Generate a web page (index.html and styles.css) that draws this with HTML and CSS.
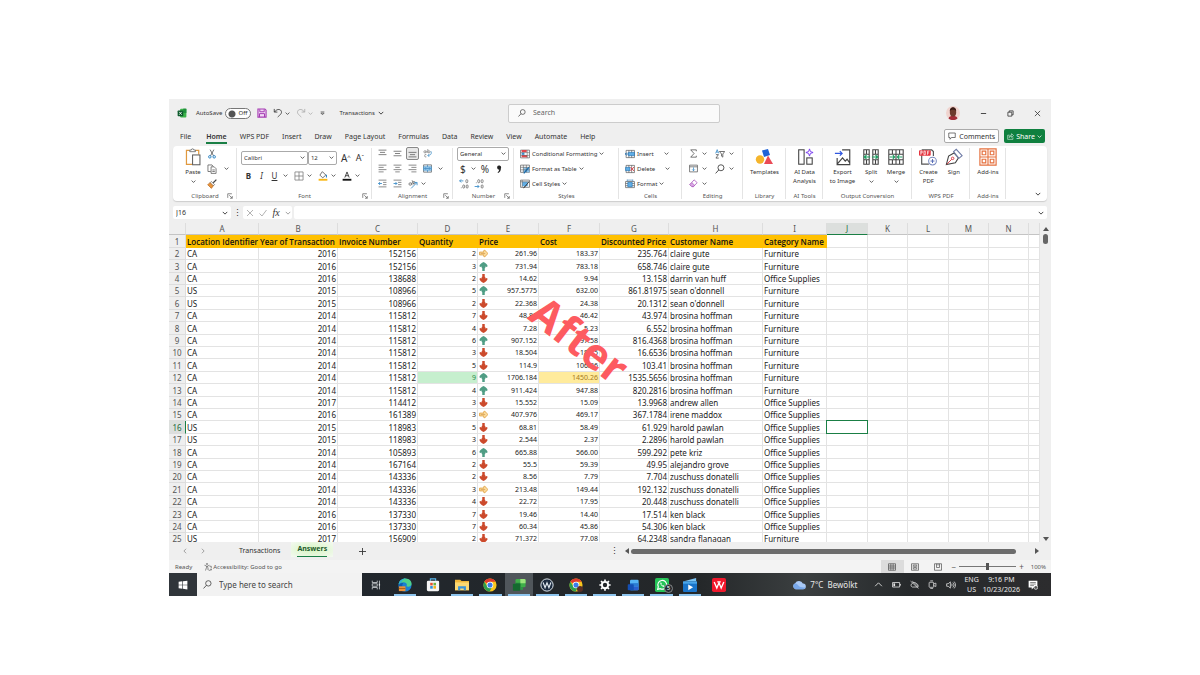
FILE: index.html
```html
<!DOCTYPE html>
<html lang="en">
<head>
<meta charset="utf-8">
<title>Transactions</title>
<link rel="stylesheet" href="styles.css">
</head>
<body>
<svg class="defs" aria-hidden="true">
  <defs>
    <symbol id="chev" viewBox="0 0 8 8"><path d="M1 2.500l3 3 3-3" fill="none" stroke="currentColor" stroke-width="1.200"/></symbol>
    <symbol id="excel" viewBox="0 0 16 16"><rect x="5" y="1" width="10" height="14" rx="1.500" fill="#3cb34a"/><path d="M10 1h5v7h-5z" fill="#1f8f3c"/><rect x="1" y="4" width="9" height="9" rx="1" fill="#0b5a2b"/><path d="M3.500 6.200l4 4.600M7.500 6.200l-4 4.600" stroke="#fff" stroke-width="1.300"/></symbol>
    <symbol id="xlapp" viewBox="0 0 16 16"><rect x="4" y="1" width="11.500" height="9.500" rx="1.500" fill="#3fae49"/><path d="M9.500 1H14a1.500 1.500 0 0 1 1.500 1.500V6h-6z" fill="#9be37c"/><path d="M4 5.500h5.500V10H4z" fill="#1d7f3a"/><rect x="1" y="6.500" width="8.500" height="8" rx="1" fill="#14692f"/><path d="M9.500 10.500h3v3h-3z" fill="#2b9a44"/></symbol>
    <symbol id="save" viewBox="0 0 16 16"><path d="M1.500 1.500h11l2 2v11h-13z" fill="#f1d9f4" stroke="#a53db3" stroke-width="1.800"/><path d="M4.500 2v4h7V2M4 14.500V9h8v5.500" fill="none" stroke="#a53db3" stroke-width="1.600"/></symbol>
    <symbol id="undo" viewBox="0 0 16 16"><path d="M2 1.500v5h5M2.500 6.500C5 2 11 1 13 4.500s-1 6-5.500 10" fill="none" stroke="currentColor" stroke-width="1.300"/></symbol>
    <symbol id="custom" viewBox="0 0 8 8"><path d="M1 1.500h6M1.500 3.500l2.500 2.500 2.500-2.500z" fill="none" stroke="currentColor"/></symbol>
    <symbol id="mag" viewBox="0 0 16 16"><circle cx="9.500" cy="6" r="4.800" fill="none" stroke="currentColor" stroke-width="1.300"/><path d="M6 9.500L1 15" stroke="currentColor" stroke-width="1.400"/></symbol>
    <symbol id="paste" viewBox="0 0 20 22"><path d="M6 3H2v17h7M13 3h4v5" fill="none" stroke="#e0993f" stroke-width="1.500"/><path d="M6 4.500V2.500h2a1.500 1.500 0 0 1 3 0h2v2z" fill="#fff" stroke="#666"/><rect x="9.500" y="8.500" width="9" height="12" fill="#fff" stroke="#555" stroke-width="1.200"/></symbol>
    <symbol id="cut" viewBox="0 0 16 16"><path d="M5 1l5.500 10M11 1L5.500 11" stroke="#444" stroke-width="1.200"/><g fill="none" stroke="#2f86c5" stroke-width="1.600"><circle cx="4.500" cy="12.500" r="2"/><circle cx="11.500" cy="12.500" r="2"/></g></symbol>
    <symbol id="copy" viewBox="0 0 16 16"><path d="M6 12H1.500V1.500H8L10 4" fill="none" stroke="#555" stroke-width="1.200"/><path d="M6.500 4.500h5l3 3v7.500h-8zM8.500 9.500h4M8.500 12h4" fill="#fff" stroke="#555" stroke-width="1.200"/></symbol>
    <symbol id="brush" viewBox="0 0 16 16"><path d="M15 1l-5 5" stroke="#444" stroke-width="2"/><path d="M7 4l5 5-2 2-5-5z" fill="#fff" stroke="#444"/><path d="M5 6L1 9l6 6 3-4z" fill="#e8943a" stroke="#b5651d"/></symbol>
    <symbol id="launch" viewBox="0 0 8 8"><path d="M1 6.500V1h5.500M3 3l4 4M7 4v3H4" fill="none" stroke="#555" stroke-width=".9"/></symbol>
    <symbol id="borders" viewBox="0 0 16 16"><path d="M1.500 1.500h13v13h-13zM8 1.500v13M1.500 8h13" fill="none" stroke="#777" stroke-width="1.200"/></symbol>
    <symbol id="fill" viewBox="0 0 16 16"><path d="M7 1l5.500 5.500L7.500 11 3 6.500z" fill="#fff" stroke="#444" stroke-width="1.200"/><path d="M13.500 6v4.500" stroke="#2f86c5" stroke-width="1.800"/><path d="M1 12.500h14v3H1z" fill="#f9b612"/></symbol>
    <symbol id="fcolor" viewBox="0 0 16 16"><path d="M4.500 10.500L8 1.500l3.500 9M5.700 7.500h4.600" fill="none" stroke="#333" stroke-width="1.400"/><path d="M1 12.500h14v3H1z" fill="#111"/></symbol>
    <symbol id="atop" viewBox="0 0 16 16"><path d="M1 2h14M3.500 6h9M1 10h14" stroke="#555" stroke-width="1.300"/></symbol>
    <symbol id="amid" viewBox="0 0 16 16"><path d="M1 4h14M3.500 8h9M1 12h14" stroke="#555" stroke-width="1.300"/></symbol>
    <symbol id="abot" viewBox="0 0 16 16"><path d="M1 6h14M3.500 10h9M1 14h14" stroke="#555" stroke-width="1.300"/></symbol>
    <symbol id="aleft" viewBox="0 0 16 16"><path d="M1 2h14M1 6h9M1 10h14M1 14h9" stroke="#555" stroke-width="1.200"/></symbol>
    <symbol id="acen" viewBox="0 0 16 16"><path d="M1 2h14M4 6h8M1 10h14M4 14h8" stroke="#555" stroke-width="1.200"/></symbol>
    <symbol id="aright" viewBox="0 0 16 16"><path d="M1 2h14M6 6h9M1 10h14M6 14h9" stroke="#555" stroke-width="1.200"/></symbol>
    <symbol id="wrap" viewBox="0 0 16 16"><g fill="none" stroke="#777" stroke-width="1.200"><circle cx="3.500" cy="5" r="2"/><path d="M5.500 3v4M8.500 0v7"/><circle cx="10.500" cy="5" r="2"/><path d="M6 10a2.200 2.200 0 1 0 0 4"/></g><path d="M14 4c2 4 0 7-5 7.500M11 9l-2.500 2.500L11 14" fill="none" stroke="#2f86c5" stroke-width="1.300"/></symbol>
    <symbol id="merge" viewBox="0 0 16 16"><path d="M1 1.500h14v13H1z" fill="#e6f2fb" stroke="#555" stroke-width="1.200"/><path d="M1 5h14v6H1z" fill="#9fd0f2" stroke="#2f86c5"/><path d="M3 8h10M5 6L3 8l2 2M11 6l2 2-2 2M8 1.500V5M8 11v3.500" fill="none" stroke="#1f6fae"/></symbol>
    <symbol id="outd" viewBox="0 0 16 16"><path d="M1 2h14M9 6h6M9 10h6M1 14h14" stroke="#555" stroke-width="1.200"/><path d="M7 8H1M3.500 5.500L1 8l2.500 2.500" fill="none" stroke="#2f86c5" stroke-width="1.500"/></symbol>
    <symbol id="ind" viewBox="0 0 16 16"><path d="M1 2h14M9 6h6M9 10h6M1 14h14" stroke="#555" stroke-width="1.200"/><path d="M1 8h6M4.500 5.500L7 8l-2.500 2.500" fill="none" stroke="#2f86c5" stroke-width="1.500"/></symbol>
    <symbol id="orient" viewBox="0 0 16 16"><g fill="none" stroke="#666" stroke-width="1.200"><circle cx="3.500" cy="8" r="2"/><path d="M5.500 6l1 4M6.500 2l2.500 6"/><circle cx="9.500" cy="6" r="2"/></g><path d="M5 15L14 6M14.500 10V5.500H10" fill="none" stroke="#2f86c5" stroke-width="1.300"/></symbol>
    <symbol id="comma" viewBox="0 0 16 16"><path d="M5 5.500a3.200 3.200 0 1 1 6 1.500c0 3.500-1.500 6-4.500 7.500l-.8-1.200C7.500 12 8.300 10.500 8.300 8.800 6.500 9 5 7.500 5 5.500z" fill="#222"/></symbol>
    <symbol id="decinc" viewBox="0 0 16 16"><path d="M7 3H1M3.500.5L1 3l2.500 2.500" fill="none" stroke="#2f86c5" stroke-width="1.300"/><g fill="none" stroke="#666" stroke-width="1.200"><rect x="11" y="1" width="3" height="5" rx="1.500"/><rect x="6" y="9.500" width="3" height="5" rx="1.500"/><rect x="11.500" y="9.500" width="3" height="5" rx="1.500"/><path d="M3 14h1.200"/></g></symbol>
    <symbol id="decdec" viewBox="0 0 16 16"><path d="M1 12h7M5.500 9.500L8 12l-2.500 2.500" fill="none" stroke="#2f86c5" stroke-width="1.300"/><g fill="none" stroke="#666" stroke-width="1.200"><rect x="6" y="1" width="3" height="5" rx="1.500"/><rect x="11.500" y="1" width="3" height="5" rx="1.500"/><rect x="11.500" y="9.500" width="3" height="5" rx="1.500"/><path d="M3 6h1.200"/></g></symbol>
    <symbol id="cond" viewBox="0 0 18 16"><path d="M1 1h16v14H1z" fill="#fff" stroke="#555" stroke-width="1.200"/><path d="M3 1h9v4H3zM3 10h10v4H3z" fill="#e0474c"/><path d="M3 5.500h5v4H3z" fill="#3b8fd0"/><path d="M1 5.500h16M1 10.500h16M13 1v14" stroke="#666"/></symbol>
    <symbol id="ftable" viewBox="0 0 18 16"><path d="M1 1h16v13H1z" fill="#fff" stroke="#555" stroke-width="1.200"/><path d="M6 5h11v9H6z" fill="#8cc5ee"/><path d="M1 5h16M1 9.500h16M6 1v13M11.500 1v13" stroke="#555"/><path d="M16 5l-7 8-2 3" stroke="#1769aa" stroke-width="2"/></symbol>
    <symbol id="cstyle" viewBox="0 0 18 16"><path d="M1 1h16v13H1z" fill="#fff" stroke="#555" stroke-width="1.200"/><path d="M4 4h10v8H4z" fill="#61aee6"/><path d="M1 4h16M4 1v13" stroke="#555"/><path d="M16 4l-7 9-3 2" stroke="#444" stroke-width="1.800"/></symbol>
    <symbol id="cins" viewBox="0 0 18 16"><path d="M2 1.500h15v13H2zM7 1.500v13M12 1.500v13" fill="#fff" stroke="#555" stroke-width="1.200"/><path d="M6 5h11v6H6z" fill="#61aee6" stroke="#1769aa"/><path d="M6 8H0M3 5.500L.5 8 3 10.500" fill="none" stroke="#1769aa" stroke-width="1.300"/></symbol>
    <symbol id="cdel" viewBox="0 0 18 16"><path d="M2 1.500h15v13H2zM7 1.500v13M12 1.500v13" fill="#fff" stroke="#555" stroke-width="1.200"/><path d="M1 5h8v6H1z" fill="#61aee6" stroke="#1769aa"/><path d="M10 4.500l6 7M16 4.500l-6 7" stroke="#d9363e" stroke-width="1.600"/></symbol>
    <symbol id="cfmt" viewBox="0 0 18 16"><path d="M1 3.500h16v11H1zM1 7h16M1 11h16" fill="#fff" stroke="#555" stroke-width="1.200"/><path d="M5 5h8v8H5z" fill="#61aee6" stroke="#1769aa"/><path d="M4 1h10M4 0v3M14 0v3" stroke="#1769aa"/></symbol>
    <symbol id="sigma" viewBox="0 0 16 16"><path d="M13 4V1.500H3L9 8l-6 6.500h10V12" fill="none" stroke="#444" stroke-width="1.300"/></symbol>
    <symbol id="sort" viewBox="0 0 16 16"><path d="M1 7l2.500-6L6 7M2 5h3" fill="none" stroke="#2f86c5" stroke-width="1.200"/><path d="M1.500 9h4l-4 5.500h4.500M7 4h8.500L12.500 8v5l-2-1.500V8z" fill="none" stroke="#444" stroke-width="1.200"/></symbol>
    <symbol id="filldn" viewBox="0 0 16 16"><path d="M1 2h14v12H1zM1 5h14" fill="none" stroke="#555" stroke-width="1.300"/><path d="M8 6v6M5.500 9.500L8 12l2.500-2.500" fill="none" stroke="#2f86c5" stroke-width="1.300"/></symbol>
    <symbol id="erase" viewBox="0 0 16 16"><path d="M9 1.500l5.500 5L8 13.500H5L1.500 10z" fill="#fff" stroke="#a045b5" stroke-width="1.300"/><path d="M1.500 10L5 6.500l5 4.500-2 2.500H5z" fill="#d9a8e3" stroke="#a045b5"/></symbol>
    <symbol id="tmpl" viewBox="0 0 18 16"><path d="M7 1.500l6-1.500 2 6-6 2z" fill="#1f63d8"/><circle cx="5" cy="10.500" r="4.200" fill="#f5b52c"/><path d="M13 6.500l5 8.500H9z" fill="#ea4b57"/></symbol>
    <symbol id="ai" viewBox="0 0 18 20"><g fill="none" stroke="#444" stroke-width="1.200"><rect x="2" y="2" width="6" height="16"/><rect x="11" y="11" width="6" height="7"/></g><path d="M14 1l1 3 3 1-3 1-1 3-1-3-3-1 3-1z" fill="#fff" stroke="#7a3ff0" stroke-width="1.100"/></symbol>
    <symbol id="export" viewBox="0 0 18 20"><path d="M8 2h8.500v16.500h-14V11M2.500 18l6-7 3 3.500 2-2 3 4" fill="none" stroke="#444" stroke-width="1.300"/><path d="M0 6h8M5.500 3.500L8 6 5.500 8.500" fill="none" stroke="#3057e0" stroke-width="1.400"/></symbol>
    <symbol id="split" viewBox="0 0 18 20"><path d="M1 2h6v16H1zM11 2h6v16h-6zM1 7h6M11 7h6M1 13h6M11 13h6M4 2v5M4 13v5M14 2v5M14 13v5" fill="none" stroke="#444" stroke-width="1.200"/><path d="M8 10H1.500M4 8l-2.500 2L4 12M10 10h6.500M14 8l2.500 2-2.500 2" fill="none" stroke="#1e9e62" stroke-width="1.300"/></symbol>
    <symbol id="mrg" viewBox="0 0 18 20"><path d="M1 2h16v16H1zM1 7h16M1 13h16M9 2v16M5 2v5M13 2v5M5 13v5M13 13v5" fill="none" stroke="#444" stroke-width="1.200"/><path d="M2 10h5.500M5.500 8l2 2-2 2M16 10h-5.500M12.500 8l-2 2 2 2" fill="none" stroke="#1e9e62" stroke-width="1.300"/></symbol>
    <symbol id="pdf" viewBox="0 0 20 20"><path d="M3 2h11l2 2v5M3 8v10h8" fill="none" stroke="#555" stroke-width="1.300"/><rect x="0" y="2.500" width="13" height="6" rx="1" fill="#e5323d"/><path d="M2 7.500v-4h1.500v2H2M5.500 3.500v4h1.500v-4zM9.500 7.500v-4h2M9.500 5.500h1.700" fill="none" stroke="#fff" stroke-width=".8"/><circle cx="15" cy="14.500" r="4.300" fill="#fff" stroke="#7c8cc0" stroke-width="1.200"/><path d="M12.800 14.500h4.400M15 12.300v4.400" stroke="#566bb5" stroke-width="1.100"/></symbol>
    <symbol id="sign" viewBox="0 0 20 20"><path d="M1.500 18.500L4 9l6-3.500L15 11l-3.500 5.500z" fill="none" stroke="#444" stroke-width="1.200"/><path d="M9.500 4l3-2.500 6.500 7-3.500 3z" fill="#fff" stroke="#6d7aa5" stroke-width="1.200"/><path d="M2 18l5.500-5.500" stroke="#d9363e"/><circle cx="8.500" cy="11.500" r="1.400" fill="none" stroke="#d9363e"/></symbol>
    <symbol id="addin" viewBox="0 0 20 20"><g fill="none" stroke="#e5713f" stroke-width="1.300"><path d="M1 1h18v18H1zM10 1v18M1 10h18"/><path d="M3.500 3.500h4v4h-4zM12.500 3.500h4v4h-4zM3.500 12.500h4v4h-4zM12.500 12.500h4v4h-4z"/></g></symbol>
    <symbol id="cmt" viewBox="0 0 16 16"><path d="M1.500 2h13v9H7l-3 3.500V11H1.500z" fill="none" stroke="currentColor" stroke-width="1.300"/></symbol>
    <symbol id="share" viewBox="0 0 16 16"><path d="M6 5H1.500v9.500h12V10M4.500 10.500C5 7 7 5 10.500 5V1.500L15 6l-4.500 4V7.500C8 7.500 6 8.500 4.500 10.500z" fill="none" stroke="currentColor" stroke-width="1.200"/></symbol>
    <symbol id="aup" viewBox="0 0 16 16"><path d="M8 0c3.500 1.500 6.500 4 7.500 7.500L13 9l-1.800-1v2.500l-1 .5V16H5.800v-5l-1-.5V8L3 9 .5 7.500C1.500 4 4.500 1.500 8 0z" fill="#4f9d84"/></symbol>
    <symbol id="adn" viewBox="0 0 16 16"><path d="M8 16c3.500-1.500 6.500-4 7.500-7.500L13 7l-1.800 1V5.500l-1-.5V0H5.800v5l-1 .5V8L3 7 .5 8.500C1.500 12 4.500 14.500 8 16z" fill="#cc4a2c"/></symbol>
    <symbol id="art" viewBox="0 0 16 16"><path d="M15.200 8c-1.200-3-3.500-5-6-6L8 4l.8 1.500H1v5h7.800L8 12l1.200 2c2.500-1 4.800-3 6-6z" fill="#fbdc9d" stroke="#e0a040" stroke-width="1.500"/><path d="M3 8h8" stroke="#c98a3a"/></symbol>
    <symbol id="acc" viewBox="0 0 16 16"><circle cx="6" cy="2" r="1.500" fill="none" stroke="#444"/><path d="M1 4.500l4 1.500v3l-2 6M11 4.500L7 6v3" fill="none" stroke="#444" stroke-width="1.200"/><path d="M8 9v4a3.500 3.500 0 0 0 6 0M12.500 12.500h2.500v2M11 6.500h3.500v4" fill="none" stroke="#444" stroke-width="1.200"/></symbol>
    <symbol id="vnorm" viewBox="0 0 16 16"><path d="M1 1.500h14v13H1zM1 6h14M1 10h14M5.700 1.500v13M10.300 1.500v13" fill="none" stroke="#444" stroke-width="1.300"/></symbol>
    <symbol id="vpage" viewBox="0 0 16 16"><path d="M1 1.500h14v13H1zM4.500 4h7v8h-7zM6 6.500h4M6 9h4" fill="none" stroke="#444" stroke-width="1.300"/></symbol>
    <symbol id="vbrk" viewBox="0 0 16 16"><path d="M1 1.500h14v13H1zM5 1.500V9h6V1.500M8 1.500V5" fill="none" stroke="#444" stroke-width="1.300"/></symbol>
    <symbol id="win" viewBox="0 0 16 16"><path d="M1 2.800l6-.8v5.500H1zM8 1.900l7-.9v6.500H8zM1 8.500h6V14l-6-.8zM8 8.500h7V15l-7-.9z" fill="#fff"/></symbol>
    <symbol id="tview" viewBox="0 0 16 16"><path d="M2 1v3h8V1M2 15v-3h8v3M2 6h8v4H2zM13.500 1v14" fill="none" stroke="#dfe3e6" stroke-width="1.200"/><path d="M12.500 6h2v3h-2z" fill="#dfe3e6"/></symbol>
    <symbol id="edge" viewBox="0 0 16 16"><circle cx="8" cy="8" r="7.500" fill="#1b7fd1"/><path d="M.7 7C1.500 3 5 .5 8.500.5c4.500 0 7.500 3.500 7 6.500-.4 2.500-3 3.500-6 2.500 1.500-2 .5-4-2-4.500C5 4.600 2 5.500.7 7z" fill="#4fd08c"/><path d="M.7 7C1.500 3 5 .5 8.500.5 5.500 2 4 3.500 3.500 5.500 2.500 5.800 1.500 6.300.7 7z" fill="#2bb3d6"/><path d="M6 6c-2 2-1.500 6 2 8.500-4 1-7-2-7.300-5.500C1 7 4 5 6 6z" fill="#0f5cae"/><path d="M1 9.500h7.500V15H1z" fill="#e9913a"/><path d="M1 12h7.500" stroke="#a65b14"/></symbol>
    <symbol id="store" viewBox="0 0 16 16"><path d="M5 3V1h6v2" fill="none" stroke="#58b9ee" stroke-width="1.300"/><rect x="1" y="3" width="14" height="12" rx="1.500" fill="#f5f5f5"/><path d="M4.800 5.500h2.900v3H4.800z" fill="#e5502d"/><path d="M8.500 5.500h2.900v3H8.500z" fill="#6db33f"/><path d="M4.800 9.200h2.900v3H4.800z" fill="#2b90d9"/><path d="M8.500 9.200h2.900v3H8.500z" fill="#f4b41a"/></symbol>
    <symbol id="files" viewBox="0 0 16 16"><path d="M0 2h6l1.500 1.500H16V14H0z" fill="#f0b63a"/><path d="M0 5h16v9H0z" fill="#fbd873"/><path d="M3.500 14V9.500h9V14h-2.500v-2H6v2z" fill="#3a93d8"/></symbol>
    <symbol id="chrome" viewBox="0 0 16 16"><circle cx="8" cy="8" r="7.500" fill="#f9c51d"/><path d="M8 8L1.500 4.200A7.500 7.500 0 0 1 14.500 4.300H8z" fill="#df3a2e"/><path d="M1.500 4.200A7.500 7.500 0 0 0 7.500 15.500L10.500 10 8 8 5 9.500z" fill="#2f9e4d"/><circle cx="8" cy="8" r="3.700" fill="#fff"/><circle cx="8" cy="8" r="2.900" fill="#3b7de8"/></symbol>
    <symbol id="wcirc" viewBox="0 0 16 16"><circle cx="8" cy="8" r="7" fill="#1c2c40" stroke="#e1e9f0" stroke-width="1.100"/><path d="M3.500 5l2.300 6L8 5.500l2.200 5.500 2.300-6" fill="none" stroke="#e1e9f0" stroke-width="1.400"/></symbol>
    <symbol id="gear" viewBox="0 0 16 16"><circle cx="8" cy="8" r="4.200" fill="none" stroke="#fff" stroke-width="2.600"/><path d="M8 .5v3M8 12.500v3M.5 8h3M12.500 8h3M2.700 2.700l2.100 2.100M11.200 11.200l2.100 2.100M13.300 2.700l-2.100 2.100M4.800 11.200l-2.100 2.100" stroke="#fff" stroke-width="2.200"/></symbol>
    <symbol id="word" viewBox="0 0 16 16"><rect x="4" y="1" width="11.500" height="14" rx="1.500" fill="#55b4f5"/><path d="M4 5.500h11.500V10H4z" fill="#2b7cd3"/><path d="M4 10h11.500v3.500a1.500 1.500 0 0 1-1.500 1.500H4z" fill="#2a5fd0"/><rect x="1" y="7" width="8" height="8" rx="1" fill="#1450b5"/></symbol>
    <symbol id="wapp" viewBox="0 0 16 16"><rect width="16" height="16" rx="2" fill="#25c357"/><path d="M3 13l.8-3A5 5 0 1 1 6 12.200z" fill="none" stroke="#fff" stroke-width="1.300"/><path d="M6 5.500c0 2.500 2 4.500 4.500 4.700l.5-1.200-1.500-.8-.8.500c-.8-.4-1.200-1-1.500-1.600l.5-.7-.7-1.400z" fill="#fff"/></symbol>
    <symbol id="movie" viewBox="0 0 16 16"><path d="M0 4L15 0v4z" fill="#7dc4f3"/><rect y="4" width="16" height="12" rx="1.200" fill="#1a74c9"/><path d="M0 4h16v2.500H0z" fill="#4aa6ea"/><path d="M6 7.500l5.500 3.200L6 14z" fill="#fff"/></symbol>
    <symbol id="wps" viewBox="0 0 16 16"><rect width="16" height="16" rx="2" fill="#f0182c"/><path d="M2.500 4.500l3 7L8 5.500l2.500 6 3-7M6 4.500h4" fill="none" stroke="#fff" stroke-width="1.500"/></symbol>
    <symbol id="cloud" viewBox="0 0 20 14"><path d="M5 13a4.500 4.500 0 0 1-.5-8.500A6 6 0 0 1 15.500 5 4 4 0 0 1 16 13z" fill="#a9c9f5"/><path d="M5 13a4.500 4.500 0 0 1-.5-8.500c3 .5 4 3 6 4.500s5 1 8.500 1.500c-.5 1.500-1.500 2.500-3 2.500z" fill="#78a8ea"/></symbol>
    <symbol id="up" viewBox="0 0 16 16"><path d="M2 11l6-6 6 6" fill="none" stroke="currentColor" stroke-width="1.500"/></symbol>
    <symbol id="batt" viewBox="0 0 16 16"><path d="M1 4.500h12.500v8H1zM15 7v3" fill="none" stroke="currentColor" stroke-width="1.400"/><path d="M2.500 6h3v5h-3z" fill="currentColor"/></symbol>
    <symbol id="nocl" viewBox="0 0 16 16"><path d="M4 12.500a3.500 3.500 0 0 1 0-6.500A5 5 0 0 1 12 7a3 3 0 0 1 1 5.500zM1 2l14 13M4 2l11 10" fill="none" stroke="currentColor" stroke-width="1.300"/></symbol>
    <symbol id="cam" viewBox="0 0 16 16"><rect x="2" y="4" width="8" height="9" rx="1" fill="none" stroke="currentColor" stroke-width="1.300"/><path d="M10 7l4-1.500v6L10 10M4 1.500h5M4 15.300h5" fill="none" stroke="currentColor" stroke-width="1.300"/></symbol>
    <symbol id="vol" viewBox="0 0 16 16"><path d="M1 6h2.500L7 3v10l-3.500-3H1zM9 6a3 3 0 0 1 0 4M11 4a5.500 5.500 0 0 1 0 8M13 2.500a8 8 0 0 1 0 11" fill="none" stroke="currentColor" stroke-width="1.200"/></symbol>
    <symbol id="note" viewBox="0 0 16 16"><path d="M1 1h14v11H9l-3 3v-3H1z" fill="#fff"/><path d="M3.500 4h9M3.500 6.500h9M3.500 9h6" stroke="#444"/><circle cx="12.500" cy="12" r="3" fill="#555" stroke="#fff"/></symbol>
  </defs>
</svg>

<main class="window">
  <header class="titlebar">
    <div class="quick">
      <svg class="i10"><use href="#excel"/></svg>
      <label class="autosave"><span>AutoSave</span><input type="checkbox" class="toggle"><span class="off">Off</span></label>
      <button class="ib" aria-label="Save"><svg class="i10"><use href="#save"/></svg></button>
      <button class="ib undo" aria-label="Undo"><svg class="i10"><use href="#undo"/></svg><svg class="i4"><use href="#chev"/></svg></button>
      <button class="ib redo" aria-label="Redo"><svg class="i10 flip"><use href="#undo"/></svg><svg class="i4"><use href="#chev"/></svg></button>
      <button class="ib cust" aria-label="Customize toolbar"><svg class="i5"><use href="#custom"/></svg></button>
      <button class="ib doc">Transactions<svg class="i6"><use href="#chev"/></svg></button>
    </div>
    <label class="search"><svg class="i8"><use href="#mag"/></svg><input type="search" placeholder="Search" aria-label="Search"></label>
    <div class="wctl">
      <svg class="avatar" viewBox="0 0 14 14"><circle cx="7" cy="7" r="7" fill="#f0d4cf"/><path d="M2.500 12.500c.5-2 2-2.500 4.500-2.500s4 .5 4.500 2.500A7 7 0 0 1 2.500 12.500z" fill="#a32c36"/><ellipse cx="7" cy="6" rx="3.200" ry="4.600" fill="#6d3a2c"/><path d="M3.800 5c0-5 6.400-5 6.400 0C9 3.200 5 3.200 3.800 5z" fill="#3a1c17"/></svg>
      <button class="ib" aria-label="Minimize"><svg class="i7" viewBox="0 0 8 8"><path d="M1 4h6" stroke="#333"/></svg></button>
      <button class="ib" aria-label="Restore"><svg class="i7" viewBox="0 0 8 8"><path d="M1 2.500h4.500V7H1zM2.500 2.500V1H7v4.500H5.500" fill="none" stroke="#333" stroke-width=".9"/></svg></button>
      <button class="ib" aria-label="Close"><svg class="i7" viewBox="0 0 8 8"><path d="M1 1l6 6M7 1L1 7" stroke="#333" stroke-width=".9"/></svg></button>
    </div>
  </header>

  <nav class="tabs">
    <a href="#" class="file">File</a><a href="#" class="on">Home</a><a href="#">WPS PDF</a><a href="#">Insert</a><a href="#">Draw</a><a href="#">Page Layout</a><a href="#">Formulas</a><a href="#">Data</a><a href="#">Review</a><a href="#">View</a><a href="#">Automate</a><a href="#">Help</a>
    <button class="comments"><svg class="i8"><use href="#cmt"/></svg>Comments</button>
    <button class="share"><svg class="i7"><use href="#share"/></svg>Share<svg class="i4"><use href="#chev"/></svg></button>
  </nav>

  <section class="ribbon">
    <div class="group">
      <div class="body clip">
        <button class="big"><svg class="i18"><use href="#paste"/></svg>Paste<svg class="i4"><use href="#chev"/></svg></button>
        <div class="rows">
          <div class="row"><button class="ib" aria-label="Cut"><svg class="i10"><use href="#cut"/></svg></button></div>
          <div class="row g8"><button class="ib" aria-label="Copy"><svg class="i10"><use href="#copy"/></svg></button><svg class="i4"><use href="#chev"/></svg></div>
          <div class="row"><button class="ib" aria-label="Format painter"><svg class="i10"><use href="#brush"/></svg></button></div>
        </div>
      </div>
      <div class="cap">Clipboard<svg class="launch"><use href="#launch"/></svg></div>
    </div>
    <div class="group">
      <div class="body font">
        <div class="row">
          <span class="sel fam"><select aria-label="Font"><option>Calibri</option></select><svg class="i4"><use href="#chev"/></svg></span><span class="sel size"><select aria-label="Font size"><option>12</option></select><svg class="i4"><use href="#chev"/></svg></span>
          <button class="ib grow">A<sup>^</sup></button><button class="ib shrink">A<sup>ˇ</sup></button>
        </div>
        <div class="row marks">
          <button class="ib"><b>B</b></button><button class="ib"><i>I</i></button><button class="ib"><u>U</u></button><svg class="i4"><use href="#chev"/></svg>
          <button class="ib" aria-label="Borders"><svg class="i10"><use href="#borders"/></svg></button><svg class="i4"><use href="#chev"/></svg>
          <button class="ib" aria-label="Fill color"><svg class="i10"><use href="#fill"/></svg></button><svg class="i4"><use href="#chev"/></svg>
          <button class="ib" aria-label="Font color"><svg class="i10"><use href="#fcolor"/></svg></button><svg class="i4"><use href="#chev"/></svg>
        </div>
      </div>
      <div class="cap">Font<svg class="launch"><use href="#launch"/></svg></div>
    </div>
    <div class="group">
      <div class="body rows align">
        <div class="row"><svg class="i9"><use href="#atop"/></svg><svg class="i9"><use href="#amid"/></svg><button class="ib pressed" aria-label="Bottom align"><svg class="i9"><use href="#abot"/></svg></button><svg class="i9"><use href="#wrap"/></svg></div>
        <div class="row"><svg class="i9"><use href="#aleft"/></svg><svg class="i9"><use href="#acen"/></svg><svg class="i9"><use href="#aright"/></svg><svg class="i9"><use href="#merge"/></svg><svg class="i4"><use href="#chev"/></svg></div>
        <div class="row"><svg class="i9"><use href="#outd"/></svg><svg class="i9"><use href="#ind"/></svg><svg class="i10"><use href="#orient"/></svg><svg class="i4 near"><use href="#chev"/></svg></div>
      </div>
      <div class="cap">Alignment<svg class="launch"><use href="#launch"/></svg></div>
    </div>
    <div class="group">
      <div class="body rows num">
        <div class="row"><span class="sel gen"><select aria-label="Number format"><option>General</option></select><svg class="i4"><use href="#chev"/></svg></span></div>
        <div class="row sym"><button class="ib">$</button><svg class="i4"><use href="#chev"/></svg><button class="ib">%</button><button class="ib" aria-label="Comma style"><svg class="i10"><use href="#comma"/></svg></button></div>
        <div class="row dec"><svg class="i10"><use href="#decinc"/></svg><svg class="i10"><use href="#decdec"/></svg></div>
      </div>
      <div class="cap">Number<svg class="launch"><use href="#launch"/></svg></div>
    </div>
    <div class="group">
      <div class="body rows list">
        <button class="row"><svg class="i10"><use href="#cond"/></svg>Conditional Formatting<svg class="i4"><use href="#chev"/></svg></button>
        <button class="row"><svg class="i10"><use href="#ftable"/></svg>Format as Table<svg class="i4"><use href="#chev"/></svg></button>
        <button class="row"><svg class="i10"><use href="#cstyle"/></svg>Cell Styles<svg class="i4"><use href="#chev"/></svg></button>
      </div>
      <div class="cap">Styles</div>
    </div>
    <div class="group">
      <div class="body rows list">
        <button class="row"><svg class="i10"><use href="#cins"/></svg>Insert<svg class="i4 far"><use href="#chev"/></svg></button>
        <button class="row"><svg class="i10"><use href="#cdel"/></svg>Delete<svg class="i4 far"><use href="#chev"/></svg></button>
        <button class="row"><svg class="i10"><use href="#cfmt"/></svg>Format<svg class="i4"><use href="#chev"/></svg></button>
      </div>
      <div class="cap">Cells</div>
    </div>
    <div class="group">
      <div class="body rows edit">
        <div class="row"><svg class="i9"><use href="#sigma"/></svg><svg class="i4"><use href="#chev"/></svg><svg class="i10"><use href="#sort"/></svg><svg class="i4"><use href="#chev"/></svg></div>
        <div class="row"><svg class="i9"><use href="#filldn"/></svg><svg class="i4"><use href="#chev"/></svg><svg class="i10"><use href="#mag"/></svg><svg class="i4"><use href="#chev"/></svg></div>
        <div class="row"><svg class="i9"><use href="#erase"/></svg><svg class="i4"><use href="#chev"/></svg></div>
      </div>
      <div class="cap">Editing</div>
    </div>
    <div class="group"><div class="body bigs"><button class="big"><svg class="i18"><use href="#tmpl"/></svg>Templates</button></div><div class="cap">Library</div></div>
    <div class="group"><div class="body bigs"><button class="big"><svg class="i18"><use href="#ai"/></svg>AI Data<br>Analysis</button></div><div class="cap">AI Tools</div></div>
    <div class="group">
      <div class="body bigs">
        <button class="big"><svg class="i18"><use href="#export"/></svg>Export<br>to Image</button>
        <button class="big"><svg class="i18"><use href="#split"/></svg>Split<svg class="i4"><use href="#chev"/></svg></button>
        <button class="big"><svg class="i18"><use href="#mrg"/></svg>Merge<svg class="i4"><use href="#chev"/></svg></button>
      </div>
      <div class="cap">Output Conversion</div>
    </div>
    <div class="group">
      <div class="body bigs">
        <button class="big"><svg class="i18"><use href="#pdf"/></svg>Create<br>PDF</button>
        <button class="big"><svg class="i18"><use href="#sign"/></svg>Sign</button>
      </div>
      <div class="cap">WPS PDF</div>
    </div>
    <div class="group"><div class="body bigs"><button class="big"><svg class="i18"><use href="#addin"/></svg>Add-ins</button></div><div class="cap">Add-ins</div></div>
    <div class="group last"><button class="ib" aria-label="Collapse ribbon"><svg class="i6"><use href="#chev"/></svg></button></div>
  </section>

  <section class="formula">
    <label class="namebox"><input value="J16" aria-label="Name box"><svg class="i6"><use href="#chev"/></svg></label>
    <span class="dots">⋮</span>
    <div class="fx"><svg class="i8" viewBox="0 0 8 8"><path d="M1 1l6 6M7 1L1 7" stroke="#aaa" stroke-width=".9"/></svg><svg class="i8" viewBox="0 0 8 8"><path d="M.5 4.500L3 7l4.500-6" fill="none" stroke="#aaa" stroke-width=".9"/></svg><button class="ib fxb"><i>fx</i></button><svg class="i6 dim"><use href="#chev"/></svg></div>
    <label class="finput"><input aria-label="Formula"><svg class="i6"><use href="#chev"/></svg></label>
  </section>

  <section class="sheet">
    <div class="grid">
      <table>
        <colgroup id="cols"></colgroup>
        <thead><tr id="letters"></tr></thead>
        <tbody id="cells"></tbody>
      </table>
      <div class="stamp">After</div>
    </div>
    <div class="vbar"><span class="tri up"></span><span class="vthumb"></span><span class="tri down"></span></div>
  </section>

  <footer class="sheets">
    <button class="ib nav" aria-label="Previous sheet"><svg class="i6 left"><use href="#chev"/></svg></button>
    <button class="ib nav" aria-label="Next sheet"><svg class="i6 right"><use href="#chev"/></svg></button>
    <a href="#" class="stab">Transactions</a>
    <a href="#" class="stab cur"><span>Answers</span></a>
    <button class="ib plus" aria-label="New sheet"><svg class="i7" viewBox="0 0 8 8"><path d="M4 0v8M0 4h8" stroke="#333"/></svg></button>
    <div class="hbar"><span class="hdots">⋮</span><span class="tri lt"></span><span class="hthumb"></span><span class="tri rt"></span></div>
  </footer>

  <footer class="status">
    <span>Ready</span>
    <svg class="i8"><use href="#acc"/></svg><span class="grow1">Accessibility: Good to go</span>
    <button class="ib view sel-v" aria-label="Normal"><svg class="i8"><use href="#vnorm"/></svg></button>
    <button class="ib view" aria-label="Page layout"><svg class="i8"><use href="#vpage"/></svg></button>
    <button class="ib view" aria-label="Page break"><svg class="i8"><use href="#vbrk"/></svg></button>
    <div class="zoom"><span>−</span><input type="range" min="0" max="100" value="50" aria-label="Zoom"><span>+</span></div>
    <span class="pct">100%</span>
  </footer>

  <nav class="taskbar">
    <button class="start" aria-label="Start"><svg class="i10"><use href="#win"/></svg></button>
    <label class="tsearch"><svg class="i9"><use href="#mag"/></svg><input placeholder="Type here to search" aria-label="Type here to search"></label>
    <div class="apps">
      <button aria-label="Task view"><svg class="i10"><use href="#tview"/></svg></button>
      <button class="run" aria-label="Edge"><svg class="i14"><use href="#edge"/></svg></button>
      <button aria-label="Store"><svg class="i14"><use href="#store"/></svg></button>
      <button class="run" aria-label="Files"><svg class="i14"><use href="#files"/></svg></button>
      <button class="run" aria-label="Chrome"><svg class="i14"><use href="#chrome"/></svg></button>
      <button class="run act" aria-label="Excel"><svg class="i14"><use href="#xlapp"/></svg></button>
      <button class="run" aria-label="W"><svg class="i14"><use href="#wcirc"/></svg></button>
      <button class="run" aria-label="Chrome profile"><svg class="i14"><use href="#chrome"/></svg><span class="face"></span></button>
      <button class="run" aria-label="Settings"><svg class="i12"><use href="#gear"/></svg></button>
      <button class="run" aria-label="Word"><svg class="i12"><use href="#word"/></svg></button>
      <button class="run" aria-label="WhatsApp"><svg class="i14"><use href="#wapp"/></svg><span class="badge">5</span></button>
      <button class="run" aria-label="Movies"><svg class="i14"><use href="#movie"/></svg></button>
      <button aria-label="WPS"><svg class="i14"><use href="#wps"/></svg></button>
    </div>
    <div class="tray">
      <button class="weather"><svg class="i14"><use href="#cloud"/></svg>7°C&nbsp; Bewölkt</button>
      <svg class="i9"><use href="#up"/></svg><svg class="i9"><use href="#batt"/></svg><svg class="i9"><use href="#nocl"/></svg><svg class="i9"><use href="#cam"/></svg><svg class="i10"><use href="#vol"/></svg>
      <span class="two">ENG<br>US</span><span class="two time">9:16 PM<br>10/23/2026</span>
      <svg class="i10"><use href="#note"/></svg>
    </div>
  </nav>
</main>
<script src="sheet.js"></script>
</body>
</html>
```

FILE: styles.css
```css
* { box-sizing: border-box; }
body { margin: 0; padding: 99px 149px 79px 169px; background: #fff; color: #333; font: 6px/8px "Noto Sans", "Open Sans", sans-serif; }
.defs { position: absolute; width: 0; height: 0; }
svg { flex: none; display: block; }
button, input, select { font: inherit; color: inherit; background: none; border: 0; padding: 0; margin: 0; outline: 0; min-width: 0; }
a { color: inherit; text-decoration: none; }
.i4 { width: 5px; height: 5px; } .i5 { width: 5px; height: 5px; } .i6 { width: 6px; height: 6px; }
.i7 { width: 7px; height: 7px; } .i8 { width: 8px; height: 8px; } .i9 { width: 9px; height: 9px; }
.i10 { width: 10px; height: 10px; } .i12 { width: 12px; height: 12px; } .i14 { width: 14px; height: 14px; } .i18 { width: 18px; height: 18px; }
.ib { display: inline-flex; align-items: center; justify-content: center; }

.window { background: #efefef; }

.titlebar { display: grid; grid-template-columns: 339fr 212fr 331fr; align-items: center; height: 28px; }
.quick { display: flex; align-items: center; padding-left: 8px; }
.autosave { display: flex; align-items: center; position: relative; margin: 0 6px 0 9px; gap: 3px; }
.toggle { appearance: none; width: 26px; height: 11px; border: 1px solid #777; border-radius: 6px; background: radial-gradient(circle at 6px 5px, #555 3px, #fff 4px); }
.off { position: absolute; right: 4px; }
.undo { margin-left: 6px; gap: 2px; }
.redo { margin-left: 6px; gap: 2px; color: #aaa; }
.flip { transform: scaleX(-1); }
.cust { margin-left: 7px; }
.doc { margin-left: 14px; gap: 3px; }
.search { display: flex; align-items: center; gap: 7px; height: 19px; padding: 0 9px; background: #fafafa; border: 1px solid #ccc; border-radius: 2px; }
.search input { flex: 1; font-size: 7px; }
.search input::placeholder { color: #666; }
.wctl { display: flex; justify-content: flex-end; align-items: center; gap: 20px; padding-right: 10px; }
.avatar { width: 14px; height: 14px; }

.tabs { display: flex; align-items: center; gap: 13px; height: 18px; padding: 0 6px 0 11px; font-size: 7px; line-height: 11px; color: #333; }
.tabs .file { margin-right: 2px; }
.tabs .on { font-weight: 600; box-shadow: 0 2px #1a7f45; }
.comments { display: flex; align-items: center; gap: 3px; height: 14px; margin-left: auto; padding: 0 3px; border: 1px solid #aaa; border-radius: 2px; background: #fff; }
.share { display: flex; align-items: center; gap: 2px; height: 14px; margin-left: -8px; padding: 0 3px; border-radius: 2px; background: #0f803f; color: #fff; }

.ribbon { display: grid; grid-template-columns: 64fr 135fr 81fr 61fr 105fr 63fr 61fr 43fr 37fr 89fr 58fr 36fr 41fr; margin: 1px 4px 0; background: #fff; border-radius: 4px; box-shadow: 0 1px 1px #ccc; }
.group { display: flex; flex-direction: column; min-width: 0; position: relative; }
.group::after { content: ""; position: absolute; right: 0; top: 2px; bottom: 2px; width: 1px; background: #e4e4e4; }
.group.last::after { display: none; }
.body { height: 45px; }
.rows { display: grid; grid-template-rows: repeat(3, 15px); }
.row { display: flex; align-items: center; }
.cap { display: flex; justify-content: center; align-items: center; height: 10px; position: relative; font-size: 6px; color: #555; white-space: nowrap; }
.launch { position: absolute; right: 4px; width: 6px; height: 6px; }
.big { display: flex; flex-direction: column; align-items: center; line-height: 9px; padding-top: 2px; gap: 0; white-space: nowrap; }
.big .i18 { margin-bottom: 2px; }
.big .i4 { margin-top: 2px; }
.clip { display: flex; gap: 5px; padding-left: 11px; }
.g8 { gap: 7px; }
.font { display: flex; flex-direction: column; gap: 3px; padding: 4px 8px 0 4px; }
.font .row { height: 15px; }
.sel { display: flex; align-items: center; height: 14px; padding: 0 2px; border: 1px solid #aaa; border-radius: 2px; background: #fff; }
.sel select { appearance: none; flex: 1; }
.sel.fam { width: 67px; } .sel.size { width: 29px; } .sel.gen { width: 52px; }
.grow { font-size: 10px; margin-left: 4px; } .shrink { font-size: 9px; margin-left: 5px; }
.grow sup, .shrink sup { font-size: 6px; line-height: 1; align-self: flex-start; }
.marks { padding-left: 1px; font-size: 8px; }
.marks .ib { width: 14px; }
.marks .i4 { margin: 0 4px 0 2px; }
.align { padding-left: 6px; }
.align .row { gap: 6px; }
.near { margin-left: -3px; }
.pressed { width: 13px; height: 13px; margin: 0 -2px; border: 1px solid #888; border-radius: 2px; background: #e8e8e8; }
.num { padding-left: 4px; }
.sym { font-size: 10px; gap: 5px; padding-left: 3px; }
.dec { gap: 5px; padding-left: 2px; }
.list { padding-left: 6px; }
.list .row { gap: 2px; white-space: nowrap; }
.far { margin-left: 8px; }
.edit { padding-left: 7px; }
.edit .row { gap: 4px; }
.edit .row > :nth-child(3) { margin-left: 4px; }
.bigs { display: flex; justify-content: space-evenly; }
.last { justify-content: flex-end; align-items: flex-end; padding: 0 6px 4px 0; }

.formula { display: flex; align-items: center; height: 22px; padding: 1px 4px 0; }
.formula label, .fx { display: flex; align-items: center; height: 13px; background: #fff; border-radius: 2px; }
.namebox { width: 58px; padding: 0 3px; font-size: 7px; }
.namebox input, .finput input { flex: 1; width: 0; }
.dots { width: 12px; text-align: center; font-size: 9px; }
.fx { width: 49px; padding: 0 1px 0 3px; justify-content: space-between; margin-right: 2px; }
.fxb { font: 10px/10px "Liberation Serif", serif; }
.dim { color: #999; }
.finput { flex: 1; padding: 0 3px; }

.sheet { display: flex; height: 319px; overflow: hidden; }
.grid { flex: 1; position: relative; min-width: 0; }
table { width: 100%; table-layout: fixed; border-collapse: separate; border-spacing: 0; background: #fff; font-size: 8px; line-height: 11px; color: #222; }
th, td { padding: 0 1px; height: 12px; border: solid #e3e3e3; border-width: 0 1px 1px 0; white-space: nowrap; overflow: visible; text-align: left; }
tbody tr:nth-child(5n+1) > *, tbody tr:nth-child(5n+3) > * { height: 13px; }
thead th, tbody th { font-weight: 400; background: #efefef; color: #555; text-align: center; font-size: 8px; }
tbody th { padding: 0; border-color: #ddd; }
thead th { border-color: #ddd; border-bottom-color: #c4c4c4; }
thead tr > th.hot { background: #dcdfdd; border-bottom-color: #1a7f45; color: #1c6b40; }
tbody th.hot { background: #dcdfdd; border-right-color: #1a7f45; color: #1c6b40; }
td.hd { background: #ffc000; border-color: #ffc000; font-family: "Open Sans", sans-serif; font-weight: 600; color: #111; }
td.r { text-align: right; }
.s { font-size: 7px; }
td.good { background: #c6efce; color: #2e8a4c; }
td.warn { background: #ffeb9c; color: #a87a20; }
td.cell-on { position: relative; }
td.cell-on::after { content: ""; position: absolute; inset: -1px; border: 1px solid #1a7f45; }
.pr { display: flex; align-items: center; justify-content: space-between; }
.stamp { position: absolute; left: 411px; top: 116px; line-height: 1; transform: translate(-50%, -50%) rotate(38deg); color: #fd5b60; font-size: 43px; font-weight: 700; }
.vbar { width: 11px; display: flex; flex-direction: column; align-items: center; padding: 4px 0 1px; }
.vthumb { width: 5px; height: 10px; margin: 3px 0 auto; border-radius: 3px; background: #666; }
.tri { border: 3px solid transparent; }
.tri.up { border-top: 0; border-bottom: 4px solid #555; }
.tri.down { border-bottom: 0; border-top: 4px solid #555; }
.tri.lt { border-left: 0; border-right: 4px solid #555; }
.tri.rt { border-right: 0; border-left: 4px solid #555; }

.sheets { display: flex; align-items: center; height: 18px; padding-left: 13px; font-size: 7px; }
.nav { margin-right: 12px; color: #999; }
.left { transform: rotate(90deg); } .right { transform: rotate(-90deg); }
.stab { padding: 0 9px; margin-left: 12px; line-height: 14px; }
.stab.cur { align-self: flex-start; margin-left: 2px; padding: 0 6px; font-weight: 700; color: #1d5a2c; background: radial-gradient(#d5f5c0, #f4f9f1); }
.cur span { display: block; border-bottom: 1px solid #1a7f45; }
.plus { margin-left: 26px; }
.hbar { display: flex; align-items: center; flex: 1; margin-left: 244px; padding-right: 12px; gap: 1px; }
.hdots { font-size: 9px; width: 14px; }
.hthumb { flex: 1; height: 5px; margin: 0 18px 0 1px; border-radius: 3px; background: #6b6b6b; }

.status { display: flex; align-items: center; height: 13px; padding: 0 5px 0 6px; background: #f3f3f3; color: #555; }
.status > .i8 { margin-left: 12px; }
.grow1 { flex: 1; margin-left: 1px; }
.view { width: 23px; height: 13px; }
.sel-v { background: #dcdcdc; }
.zoom { display: flex; align-items: center; gap: 3px; margin-left: 2px; font-size: 8px; }
.zoom input { appearance: none; width: 57px; height: 8px; background: linear-gradient(#777, #777) center / 100% 1px no-repeat; }
.zoom input::-webkit-slider-thumb { appearance: none; width: 3px; height: 7px; background: #555; }
.pct { margin-left: 7px; }

.taskbar { display: flex; height: 23px; background: linear-gradient(90deg, #20272f, #242729 60%, #3b3f40 72%, #26292b 84%, #2c2c2e); color: #e8e8e8; }
.start { width: 28px; display: flex; align-items: center; justify-content: center; background: #30353a; }
.tsearch { display: flex; align-items: center; gap: 7px; width: 165px; padding-left: 6px; background: #f2f2f2; color: #333; }
.tsearch input { flex: 1; font-size: 8px; }
.tsearch input::placeholder { color: #444; }
.apps { display: flex; width: 371px; }
.apps button { flex: 1; display: flex; align-items: center; justify-content: center; position: relative; }
.run::after { content: ""; position: absolute; left: 3px; right: 3px; bottom: 0; height: 2px; background: #8ec5ee; }
.act { background: #50565b; }
.face { position: absolute; right: 7px; bottom: 4px; width: 6px; height: 6px; border-radius: 50%; background: #5a3026; }
.badge { position: absolute; right: 3px; bottom: 3px; width: 9px; height: 9px; border-radius: 50%; border: 1px solid #888; background: #222a2f; line-height: 7px; text-align: center; color: #fff; }
.tray { flex: 1; display: flex; align-items: center; justify-content: flex-end; gap: 9px; padding-right: 13px; }
.weather { display: flex; align-items: center; gap: 4px; margin-right: 8px; font-size: 8px; white-space: nowrap; }
.two { font-size: 7px; text-align: center; line-height: 10px; white-space: nowrap; }
.time { margin: 0 -1px 0 -5px; }
.tray .two:not(.time) { margin-left: -1px; }
```

FILE: sheet.js
```js
const widths = [17, 73, 79, 80, 60, 61, 61, 69, 94, 64, 41, 40, 41, 40, 40, 11];
const letters = ["", ..."ABCDEFGHIJKLMN", ""];
const heads = ["Location Identifier", "Year of Transaction", "Invoice Number", "Quantity", "Price", "Cost", "Discounted Price", "Customer Name", "Category Name"];
// location | year | invoice | quantity | trend | price | cost | discounted | customer | category
const data = `CA|2016|152156|2|art|261.96|183.37|235.764|claire gute|F
CA|2016|152156|3|aup|731.94|783.18|658.746|claire gute|F
CA|2016|138688|2|adn|14.62|9.94|13.158|darrin van huff|O
US|2015|108966|5|aup|957.5775|632.00|861.81975|sean o'donnell|F
US|2015|108966|2|adn|22.368|24.38|20.1312|sean o'donnell|F
CA|2014|115812|7|adn|48.86|46.42|43.974|brosina hoffman|F
CA|2014|115812|4|adn|7.28|5.23|6.552|brosina hoffman|F
CA|2014|115812|6|aup|907.152|97.58|816.4368|brosina hoffman|F
CA|2014|115812|3|adn|18.504|18.35|16.6536|brosina hoffman|F
CA|2014|115812|5|adn|114.9|106.86|103.41|brosina hoffman|F
CA|2014|115812|9|aup|1706.184|1450.26|1535.5656|brosina hoffman|F
CA|2014|115812|4|aup|911.424|947.88|820.2816|brosina hoffman|F
CA|2017|114412|3|adn|15.552|15.09|13.9968|andrew allen|O
CA|2016|161389|3|art|407.976|469.17|367.1784|irene maddox|O
US|2015|118983|5|adn|68.81|58.49|61.929|harold pawlan|O
US|2015|118983|3|adn|2.544|2.37|2.2896|harold pawlan|O
CA|2014|105893|6|aup|665.88|566.00|599.292|pete kriz|O
CA|2014|167164|2|adn|55.5|59.39|49.95|alejandro grove|O
CA|2014|143336|2|adn|8.56|7.79|7.704|zuschuss donatelli|O
CA|2014|143336|3|art|213.48|149.44|192.132|zuschuss donatelli|O
CA|2014|143336|4|adn|22.72|17.95|20.448|zuschuss donatelli|O
CA|2016|137330|7|adn|19.46|14.40|17.514|ken black|O
CA|2016|137330|7|adn|60.34|45.86|54.306|ken black|O
US|2017|156909|2|adn|71.372|77.08|64.2348|sandra flanagan|F`;
document.getElementById("cols").innerHTML = widths.map(w => `<col style="width:${w}px">`).join("");
document.getElementById("letters").innerHTML = letters.map(l => `<th${l === "J" ? ' class="hot"' : ""}>${l}</th>`).join("");
const blanks = on => `<td${on ? ' class="cell-on"' : ""}></td>` + "<td></td>".repeat(5);
let html = `<tr><th>1</th>${heads.map(h => `<td class="hd">${h}</td>`).join("")}${blanks(false)}</tr>`;
data.split("\n").forEach((line, i) => {
  const n = i + 2;
  const [loc, year, inv, qty, dir, price, cost, disc, name, cat] = line.split("|");
  html += `<tr><th${n === 16 ? ' class="hot"' : ""}>${n}</th><td>${loc}</td><td class="r">${year}</td><td class="r">${inv}</td>`
    + `<td class="r s${n === 12 ? " good" : ""}">${qty}</td>`
    + `<td class="s"><div class="pr"><svg class="i9"><use href="#${dir}"/></svg>${price}</div></td>`
    + `<td class="r s${n === 12 ? " warn" : ""}">${cost}</td><td class="r">${disc}</td><td>${name}</td>`
    + `<td>${cat === "F" ? "Furniture" : "Office Supplies"}</td>${blanks(n === 16)}</tr>`;
});
document.getElementById("cells").innerHTML = html;
```
